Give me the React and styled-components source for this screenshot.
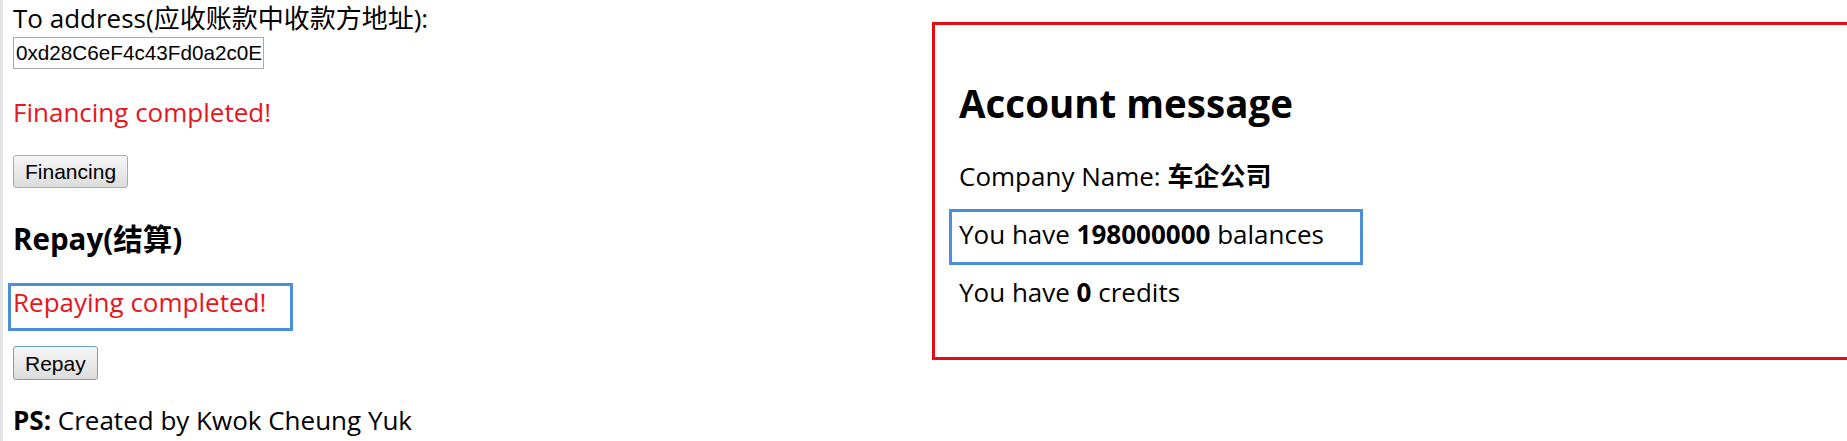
import React from 'react';
import styled, { createGlobalStyle } from 'styled-components';

const GlobalStyle = createGlobalStyle`
  html, body {
    margin: 0;
    padding: 0;
    background: #fff;
    overflow: hidden;
  }
  body {
    font-family: "Open Sans", "Noto Sans CJK SC", sans-serif;
    font-size: 26px;
    color: #000;
  }
`;

const Page = styled.div`
  display: flex;
  align-items: flex-start;
  width: 1847px;
  height: 441px;
  border-left: 3px solid #e4e4e4;
  box-sizing: border-box;
`;

const LeftCol = styled.div`
  width: 929px;
  flex: none;
  padding: 2px 0 0 10px;
  box-sizing: border-box;
`;

const Line = styled.p`
  margin: ${p => p.$mt || 0}px 0 0;
  line-height: 33px;
  color: ${p => (p.$red ? '#e8141c' : '#000')};
  white-space: nowrap;
`;

const AddressInput = styled.input`
  display: block;
  margin-top: 2px;
  width: 251px;
  height: 32px;
  box-sizing: border-box;
  border: 1px solid #a9a9a9;
  padding: 0 1px 0 2px;
  font-family: "Liberation Sans", Arial, sans-serif;
  font-size: 20.7px;
  color: #000;
  outline: none;
`;

const Button = styled.button`
  display: block;
  margin-top: ${p => p.$mt}px;
  height: ${p => p.$h || 33}px;
  padding: 0 11px;
  box-sizing: border-box;
  border: 1px solid ${p => (p.$focused ? '#6f9fd8' : '#acacac')};
  border-radius: 3px;
  background: linear-gradient(#f6f6f6, #dcdcdc);
  font-family: "Liberation Sans", Arial, sans-serif;
  font-size: 21px;
  color: #000;
  line-height: 1;
`;

const SubTitle = styled.h3`
  margin: 32px 0 0;
  font-size: 29.5px;
  line-height: 38px;
  font-weight: 700;
`;

const Marked = styled.div`
  width: ${p => p.$w}px;
  box-sizing: border-box;
  border: 3px solid #4a90d9;
  margin: ${p => p.$mt}px 0 0 ${p => p.$ml}px;
  padding: ${p => p.$pt}px 0 ${p => p.$pb}px ${p => p.$pl}px;
`;

const AccountBox = styled.div`
  flex: none;
  width: 1000px;
  margin-top: 22px;
  border: 3px solid #e30d12;
  padding: 0 0 48px 24px;
  box-sizing: border-box;
`;

const BoxTitle = styled.h2`
  margin: 53px 0 0;
  font-size: 38.5px;
  line-height: 50px;
  font-weight: 700;
`;

const App = () => {
  return (
    <>
      <GlobalStyle />
      <Page>
        <LeftCol>
          <Line>To address(应收账款中收款方地址):</Line>
          <AddressInput defaultValue="0xd28C6eF4c43Fd0a2c0E" />
          <Line $mt={27} $red>Financing completed!</Line>
          <Button $mt={26} $h={33}>Financing</Button>
          <SubTitle>Repay(结算)</SubTitle>
          <Marked $w={285} $mt={25} $ml={-5} $pt={0} $pb={9} $pl={2}>
            <Line $red>Repaying completed!</Line>
          </Marked>
          <Button $mt={15} $h={34} $focused>Repay</Button>
          <Line $mt={24}><b>PS:</b> Created by Kwok Cheung Yuk</Line>
        </LeftCol>
        <AccountBox>
          <BoxTitle>Account message</BoxTitle>
          <Line $mt={32}>Company Name: <b>车企公司</b></Line>
          <Marked $w={414} $mt={16} $ml={-10} $pt={6} $pb={11} $pl={7}>
            <Line>You have <b>198000000</b> balances</Line>
          </Marked>
          <Line $mt={11}>You have <b>0</b> credits</Line>
        </AccountBox>
      </Page>
    </>
  );
};

export default App;
